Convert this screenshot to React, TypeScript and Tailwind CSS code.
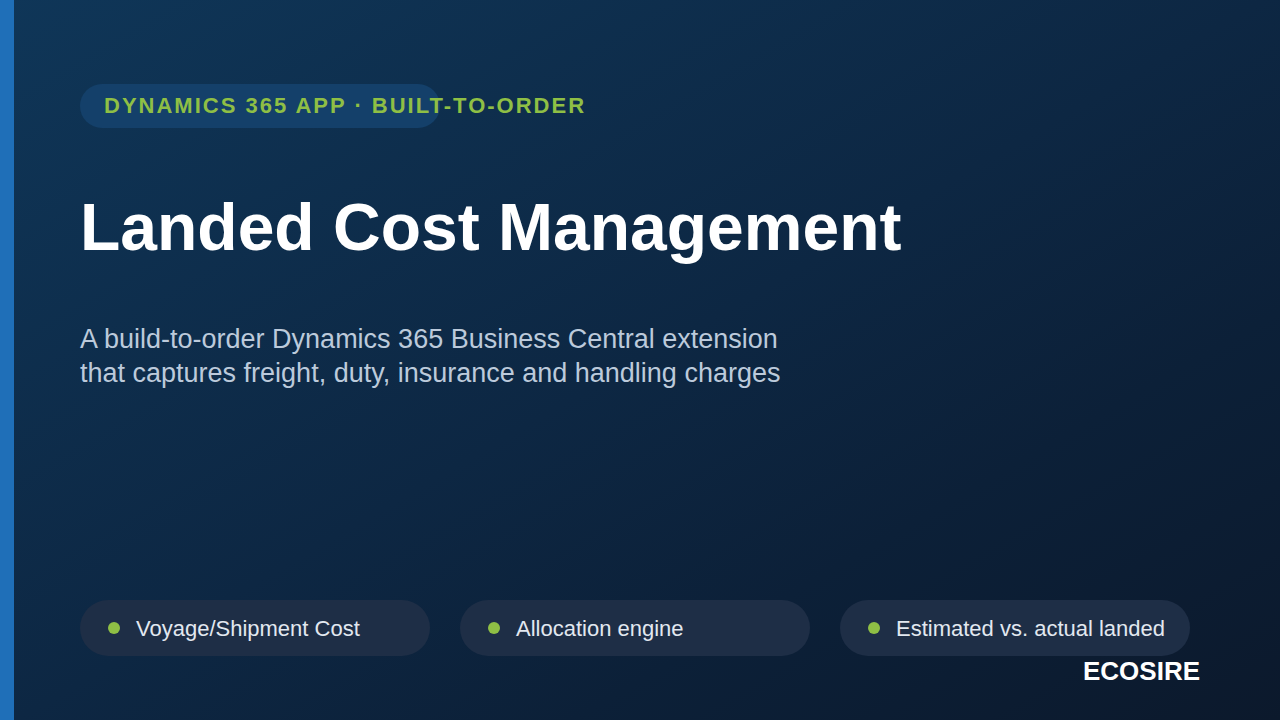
const features = ["Voyage/Shipment Cost", "Allocation engine", "Estimated vs. actual landed"];

export default function App() {
	return (
		<div className="relative flex h-[720px] w-[1280px] overflow-hidden bg-[linear-gradient(150deg,#0f3658_0%,#0d2743_50%,#0c2038_72%,#0c192c_100%)] font-['Liberation_Sans',Arial,sans-serif]">
			<div className="w-[14px] shrink-0 bg-[#1f6fb8]" />
			<div className="flex flex-1 flex-col pl-[66px] pt-[84px]">
				<div className="flex h-[44px] w-[360px] items-center whitespace-nowrap rounded-[22px] bg-[#14406a] pb-[2px] pl-[24px] text-[22px] font-bold tracking-[2px] text-[#8fbf45]">
					DYNAMICS 365 APP · BUILT-TO-ORDER
				</div>
				<h1 className="mt-[60px] text-[66px] font-bold leading-[78px] text-white">
					Landed Cost Management
				</h1>
				<p className="mt-[56px] text-[27px] leading-[34px] text-[#bccadb]">
					A build-to-order Dynamics 365 Business Central extension
					<br />
					that captures freight, duty, insurance and handling charges
				</p>
				<div className="mt-[210px] flex gap-[30px]">
					{features.map((f) => (
						<div
							key={f}
							className="flex h-[56px] w-[350px] items-center gap-[16px] whitespace-nowrap rounded-[28px] bg-[#1e2e46] pl-[28px] text-[22px] text-[#e2e8f0]"
						>
							<span className="h-[12px] w-[12px] shrink-0 rounded-full bg-[#8fbf45]" />
							{f}
						</div>
					))}
				</div>
			</div>
			<div className="absolute right-[80px] top-[654px] text-[26px] font-bold leading-[34px] text-white">
				ECOSIRE
			</div>
		</div>
	);
}
